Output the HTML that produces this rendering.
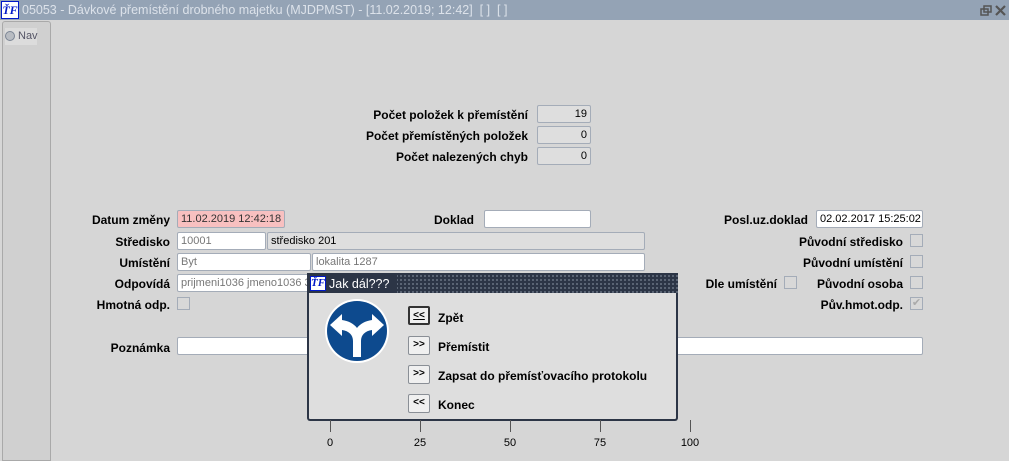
<!DOCTYPE html><html><head><meta charset="utf-8"><style>
*{margin:0;padding:0;box-sizing:border-box}
body{width:1009px;height:456px;background:#d6d6d6;font-family:"Liberation Sans",Arial,sans-serif;font-size:12px;position:relative;overflow:hidden;color:#000}
.a{position:absolute}
.lb{position:absolute;font-weight:bold;text-align:right;font-size:12px;white-space:nowrap}
.f{position:absolute;background:#dedede;border:1px solid #a4acb8;border-radius:2px;height:18px;font-size:11px;padding:2px 3px;white-space:nowrap;overflow:hidden}
.w{background:#fff}
.cb{position:absolute;width:13px;height:13px;border:1px solid #a4acb8;background:#d8d8d8}
.btn{position:absolute;left:408px;width:22px;height:19px;border:1px solid #8a8f96;background:#f0f0f0;font-size:10px;font-weight:bold;text-align:center;line-height:16px;border-radius:2px}
.bt{position:absolute;left:438px;font-weight:bold;font-size:12px}
.tk{position:absolute;top:420px;width:1px;height:12px;background:#555}
.tl{position:absolute;top:437px;font-size:11px;width:30px;text-align:center}
</style></head><body>
<div class="a" style="left:0;top:0;width:1009px;height:20px;background:#94a3b5"></div>
<div class="a" style="left:1px;top:1px;width:18px;height:18px;background:#fff;border:1px solid #0018c8;color:#0018c8;font:italic bold 12px 'Liberation Serif',serif;text-align:center;line-height:16px">ŤF</div>
<div class="a" style="left:22px;top:3px;color:#dce2ea;font-size:12.5px">05053 - Dávkové přemístění drobného majetku (MJDPMST) - [11.02.2019; 12:42]&nbsp; [ ]&nbsp; [ ]</div>
<svg class="a" style="left:979px;top:4px" width="28" height="14"><rect x="2" y="5" width="7" height="6" fill="none" stroke="#555" stroke-width="1.5"/><rect x="5" y="2" width="7" height="6" fill="none" stroke="#555" stroke-width="1.5"/><path d="M17 2L26 11M26 2L17 11" stroke="#555" stroke-width="2.2"/></svg>
<div class="a" style="left:2px;top:21px;width:49px;height:440px;border:1px solid #a9a9a9;background:#d0d0d0;border-radius:3px 3px 0 0"></div>
<div class="a" style="left:5px;top:28px;width:32px;height:17px;background:#dcdcdc"></div>
<div class="a" style="left:5px;top:31px;width:10px;height:10px;border-radius:50%;border:1px solid #7b8594;background:#b8bcc2"></div>
<div class="a" style="left:18px;top:30px;font-size:11px;color:#556">Nav</div>

<div class="lb" style="right:481px;top:108px">Počet položek k přemístění</div>
<div class="lb" style="right:481px;top:129px">Počet přemístěných položek</div>
<div class="lb" style="right:481px;top:150px">Počet nalezených chyb</div>
<div class="f" style="left:537px;top:105px;width:54px;text-align:right">19</div>
<div class="f" style="left:537px;top:126px;width:54px;text-align:right">0</div>
<div class="f" style="left:537px;top:147px;width:54px;text-align:right">0</div>

<div class="lb" style="right:839px;top:213px">Datum změny</div>
<div class="f" style="left:177px;top:210px;width:108px;background:#f8c0c0;color:#333">11.02.2019 12:42:18</div>
<div class="lb" style="right:535px;top:213px">Doklad</div>
<div class="f w" style="left:484px;top:210px;width:107px"></div>
<div class="lb" style="right:201px;top:213px">Posl.uz.doklad</div>
<div class="f w" style="left:816px;top:210px;width:107px">02.02.2017 15:25:02</div>

<div class="lb" style="right:839px;top:235px">Středisko</div>
<div class="f w" style="left:177px;top:232px;width:89px;color:#777">10001</div>
<div class="f" style="left:267px;top:232px;width:378px">středisko 201</div>
<div class="lb" style="right:839px;top:256px">Umístění</div>
<div class="f w" style="left:177px;top:253px;width:134px;color:#777">Byt</div>
<div class="f w" style="left:312px;top:253px;width:333px;color:#777">lokalita 1287</div>
<div class="lb" style="right:839px;top:277px">Odpovídá</div>
<div class="f w" style="left:177px;top:274px;width:140px;color:#777">prijmeni1036 jmeno1036 3036</div>
<div class="lb" style="right:839px;top:298px">Hmotná odp.</div>
<div class="cb" style="left:177px;top:297px"></div>
<div class="lb" style="right:839px;top:341px">Poznámka</div>
<div class="f w" style="left:177px;top:337px;width:746px"></div>

<div class="lb" style="right:106px;top:235px">Původní středisko</div>
<div class="lb" style="right:106px;top:256px">Původní umístění</div>
<div class="lb" style="right:106px;top:277px">Původní osoba</div>
<div class="lb" style="right:106px;top:298px">Pův.hmot.odp.</div>
<div class="lb" style="right:232px;top:277px">Dle umístění</div>
<div class="cb" style="left:910px;top:234px"></div>
<div class="cb" style="left:910px;top:255px"></div>
<div class="cb" style="left:910px;top:276px"></div>
<div class="cb" style="left:910px;top:297px;color:#aaa;font-size:11px;line-height:11px;text-align:center">✔</div>
<div class="cb" style="left:784px;top:276px"></div>

<div class="a" style="left:307px;top:273px;width:371px;height:148px;background:#dedede;border:2px solid #2c3546;border-top:none;border-radius:3px"></div>
<div class="a" style="left:307px;top:273px;width:371px;height:20px;background:#2c3546;background-image:radial-gradient(#6a7384 0.8px,transparent 1px);background-size:4px 4px;background-position:0 1px"></div>
<div class="a" style="left:307px;top:273px;width:90px;height:20px;background:#2c3546"></div>
<div class="a" style="left:310px;top:276px;width:16px;height:15px;background:#fff;border:1px solid #0018c8;color:#0018c8;font:italic bold 11px 'Liberation Serif',serif;text-align:center;line-height:13px">ŤF</div>
<div class="a" style="left:329px;top:277px;color:#fff;font-size:12.5px">Jak dál???</div>
<svg class="a" style="left:323px;top:297px" width="70" height="70"><circle cx="34" cy="34" r="32" fill="#fff"/><circle cx="34" cy="34" r="30" fill="#0d4a8e"/>
<path fill="#fff" d="M30 60V44C30 38 26 34 19 33V39L7 28 19 17V23C26 24 31 27 34 31 37 27 42 24 49 23V17L61 28 49 39V33C42 34 38 38 38 44V60Z"/></svg>
<div class="btn" style="top:306px;border:2px solid #333;text-decoration:underline">&lt;&lt;</div>
<div class="bt" style="top:311px">Zpět</div>
<div class="btn" style="top:336px">&gt;&gt;</div>
<div class="bt" style="top:340px">Přemístit</div>
<div class="btn" style="top:365px">&gt;&gt;</div>
<div class="bt" style="top:369px">Zapsat do přemísťovacího protokolu</div>
<div class="btn" style="top:394px">&lt;&lt;</div>
<div class="bt" style="top:398px">Konec</div>

<div class="tk" style="left:330px"></div><div class="tk" style="left:420px"></div><div class="tk" style="left:510px"></div><div class="tk" style="left:600px"></div><div class="tk" style="left:690px"></div>
<div class="tl" style="left:315px">0</div><div class="tl" style="left:405px">25</div><div class="tl" style="left:495px">50</div><div class="tl" style="left:585px">75</div><div class="tl" style="left:675px">100</div>
</body></html>
